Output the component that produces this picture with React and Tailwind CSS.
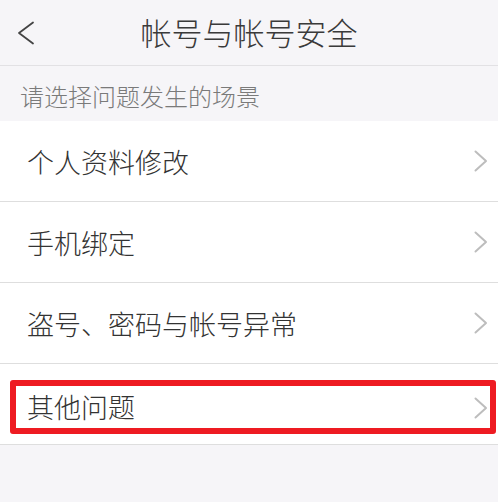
import React from 'react';

const rows = ['个人资料修改', '手机绑定', '盗号、密码与帐号异常', '其他问题'];

const Chevron = ({ className }) => (
  <svg viewBox="0 0 14 22" className={className} fill="none">
    <path d="M1.5 1.5 L12 11 L1.5 20.5" stroke="currentColor" strokeWidth="2" strokeLinecap="round" strokeLinejoin="round" />
  </svg>
);

export default function App() {
  return (
    <div
      className="w-[498px] h-[502px] bg-[#f6f5f8] overflow-hidden font-light"
      style={{ fontFamily: '"Noto Sans CJK SC", "Noto Sans", sans-serif' }}
    >
      {/* Header */}
      <div className="relative h-[66px] flex items-center justify-center border-b border-[#e2e1e4]">
        <button className="absolute left-[17px] top-[21px] text-[#444]">
          <svg viewBox="0 0 18 24" className="w-[18px] h-[24px]" fill="none">
            <path d="M16 1.5 L2 12 L16 22.5" stroke="currentColor" strokeWidth="1.8" strokeLinecap="round" strokeLinejoin="round" />
          </svg>
        </button>
        <h1 className="text-[31px] leading-none text-[#3a3a3a] font-light pb-[2px]">帐号与帐号安全</h1>
      </div>

      {/* Section label */}
      <div className="h-[55px] flex items-center pl-[20px] pt-[4px]">
        <p className="text-[24px] leading-none text-[#7a7a7a]">请选择问题发生的场景</p>
      </div>

      {/* Rows */}
      <div className="bg-white">
        {rows.map((label, i) => (
          <div
            key={label}
            className="relative h-[81px] flex items-center justify-between pl-[27px] pr-[10px] border-b border-[#dedede]"
          >
            <span className={`text-[27px] leading-none text-[#333] ${i === 3 ? 'pt-[4px]' : ''}`}>{label}</span>
            <Chevron className={`w-[14px] h-[22px] text-[#bdbdbd] ${i === 3 ? 'mt-[8px]' : ''}`} />
            {i === 3 && (
              <div className="absolute left-[10px] right-[2px] top-[16px] bottom-[10px] border-[6px] border-[#ee1b22] rounded-[3px] pointer-events-none" />
            )}
          </div>
        ))}
      </div>
    </div>
  );
}
